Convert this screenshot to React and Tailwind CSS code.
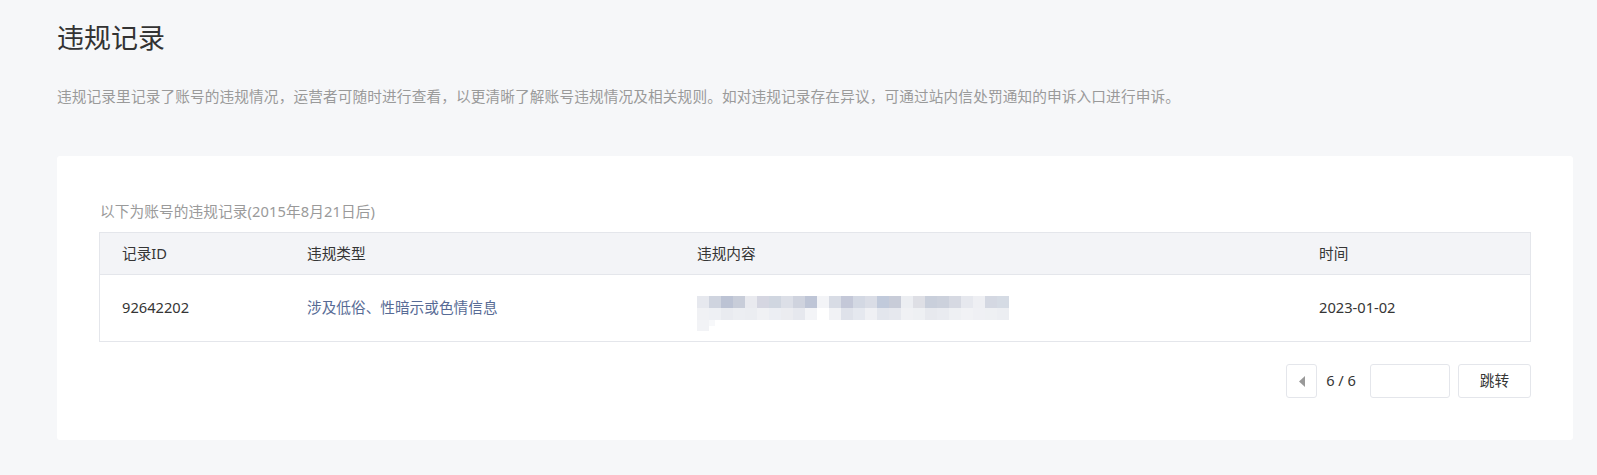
import React from "react";

const mosaicTop = [
  "#e6e8ee", "#cfd4df", "#bcc3d4", "#c8cdd9", "#e9eaef", "#d5d6e1", "#d0d6e0", "#dcdfe7", "#cfd3de", "#bec5d6",
  "#f3f4f7", "#d8dce5", "#c4c8d8", "#d3d8e3", "#dadde6", "#c1cadb", "#c8ccd8", "#eceef2", "#dedfe5", "#c9cfdb",
  "#ccd1dc", "#d6d9e2", "#e6e8ee", "#eeeff3", "#d4d8e2", "#d5dbe4",
];
const mosaicBottom = [
  "#f0f1f4", "#eef0f4", "#e9ebf0", "#eceef2", "#ebedf1", "#f0f1f4", "#eceef3", "#ebecf0", "#e6e8ee", "#f3f4f7",
  "#ffffff", "#f1f2f5", "#dfe2ea", "#e5e8ef", "#eff0f4", "#e3e6ed", "#e6e8ee", "#f0f1f4", "#eef0f3", "#e7e9ee",
  "#e9ebf0", "#eef0f3", "#f1f2f5", "#eff0f4", "#eef0f3", "#eceef2",
];

function Mosaic() {
  return (
    <svg width="312" height="36" viewBox="0 0 312 36" className="block">
      {mosaicTop.map((c, i) => (
        <rect key={"t" + i} x={i * 12} y={0} width={12} height={12} fill={c} />
      ))}
      {mosaicBottom.map((c, i) => (
        <rect key={"b" + i} x={i * 12} y={12} width={12} height={12} fill={c} />
      ))}
      <rect x={0} y={24} width={12} height={11} fill="#f2f3f6" />
      <rect x={12} y={24} width={6} height={6} fill="#f7f8fa" />
    </svg>
  );
}

export default function App() {
  return (
    <div
      className="min-h-[475px] bg-[#f6f7f9] pl-[57px] pr-[24px] pt-[20px] pb-[35px]"
      style={{ fontFamily: '"Noto Sans", "Noto Sans CJK SC", sans-serif' }}
    >
      <h1 className="text-[27px] leading-[36px] text-[#333333] font-normal">违规记录</h1>
      <p className="mt-[29px] text-[14.66px] leading-[22px] tracking-[0.12px] text-[#9a9a9a]">
        违规记录里记录了账号的违规情况，运营者可随时进行查看，以更清晰了解账号违规情况及相关规则。如对违规记录存在异议，可通过站内信处罚通知的申诉入口进行申诉。
      </p>

      <div className="mt-[49px] bg-white rounded-[3px] px-[42px] pt-[44px] pb-[42px]">
        <div className="pl-[1px] text-[14.66px] leading-[22px] tracking-[0.1px] text-[#9a9a9a]">
          以下为账号的违规记录(2015年8月21日后)
        </div>

        <div className="mt-[10px] border border-[#e4e6eb] text-[14.66px] text-[#353535]">
          <div className="grid grid-cols-[185px_390px_622px_1fr] h-[42px] items-center bg-[#f3f4f7] border-b border-[#e4e6eb]">
            <div className="pl-[22px]">记录ID</div>
            <div className="pl-[22px]">违规类型</div>
            <div className="pl-[22px]">违规内容</div>
            <div className="pl-[22px]">时间</div>
          </div>
          <div className="grid grid-cols-[185px_390px_622px_1fr] h-[66px] items-center">
            <div className="pl-[22px]">92642202</div>
            <div className="pl-[22px] text-[#576b95]">涉及低俗、性暗示或色情信息</div>
            <div className="pl-[22px] pt-[12px]">
              <Mosaic />
            </div>
            <div className="pl-[22px]">2023-01-02</div>
          </div>
        </div>

        <div className="mt-[22px] flex items-center justify-end">
          <button className="w-[31px] h-[34px] border border-[#e4e6eb] rounded-[3px] bg-white flex items-center justify-center">
            <svg width="6" height="11" viewBox="0 0 6 11">
              <path d="M6 0 L0 5.5 L6 11 Z" fill="#999999" />
            </svg>
          </button>
          <span className="ml-[9px] mr-[1px] text-[14.66px] text-[#353535]">6 / 6</span>
          <input
            className="ml-[13px] w-[80px] h-[34px] border border-[#e4e6eb] rounded-[3px] bg-white outline-none px-2"
            type="text"
          />
          <button className="ml-[8px] w-[73px] h-[34px] border border-[#e4e6eb] rounded-[3px] bg-white text-[14.66px] text-[#353535]">
            跳转
          </button>
        </div>
      </div>
    </div>
  );
}
